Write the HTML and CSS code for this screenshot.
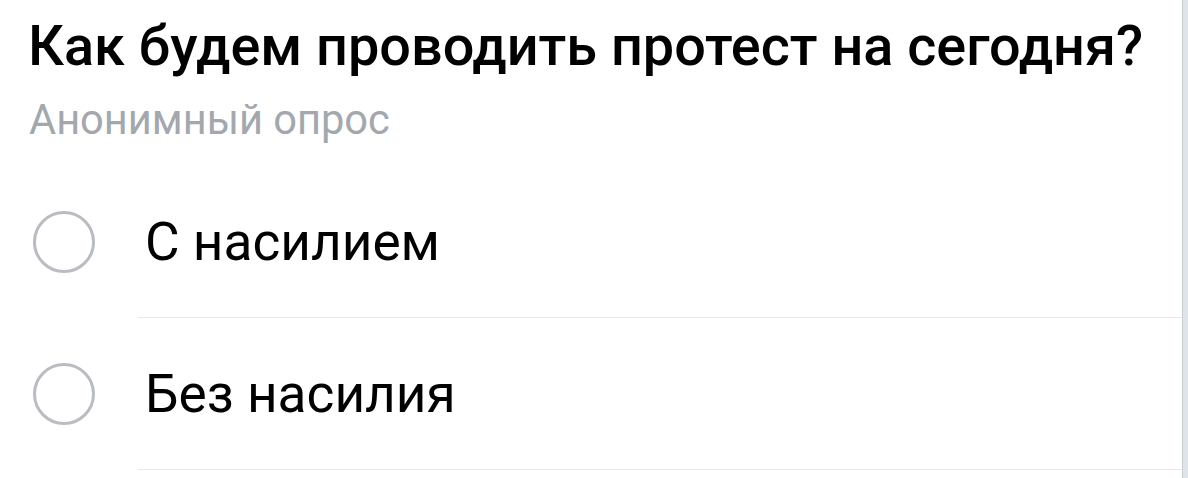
FILE: index.html
```html
<!DOCTYPE html>
<html lang="ru">
<head>
    <meta charset="UTF-8">
    <title>Опрос</title>
    <link rel="stylesheet" href="styles.css">
</head>
<body>
    <div class="poll">
        <h1 class="poll-title">Как будем проводить протест на сегодня?</h1>
        <p class="poll-type">Анонимный опрос</p>

        <div class="options">
            <label class="option">
                <span class="radio"></span>
                <span class="option-text">С насилием</span>
            </label>
            <label class="option">
                <span class="radio"></span>
                <span class="option-text">Без насилия</span>
            </label>
        </div>
    </div>
</body>
</html>
```

FILE: styles.css
```css
* {
    margin: 0;
    padding: 0;
    box-sizing: border-box;
}

html, body {
    height: 100%;
}

body {
    background-color: #dfe4ea;
    font-family: Roboto, "Liberation Sans", sans-serif;
    color: #000;
}

.poll {
    width: 1183px;
    height: 100%;
    background: #fff;
    border-right: 1px solid #c9ced5;
    overflow: hidden;
}

.poll-title {
    font-size: 55.8px;
    font-weight: 500;
    line-height: 65px;
    padding: 14px 0 0 28px;
    white-space: nowrap;
}

.poll-type {
    font-size: 41.6px;
    line-height: 48px;
    color: #a2a8ae;
    padding: 17px 0 0 29px;
}

.options {
    padding-top: 22px;
}

.option {
    display: flex;
    align-items: center;
    height: 152px;
}

.radio {
    flex: none;
    width: 62px;
    height: 62px;
    margin-left: 33px;
    border: 3px solid #b9bdc2;
    border-radius: 50%;
}

.option-text {
    flex: 1;
    align-self: stretch;
    display: flex;
    align-items: center;
    margin-left: 43px;
    padding-left: 7px;
    font-size: 53.2px;
    border-bottom: 1px solid #e7e8ea;
}
```
